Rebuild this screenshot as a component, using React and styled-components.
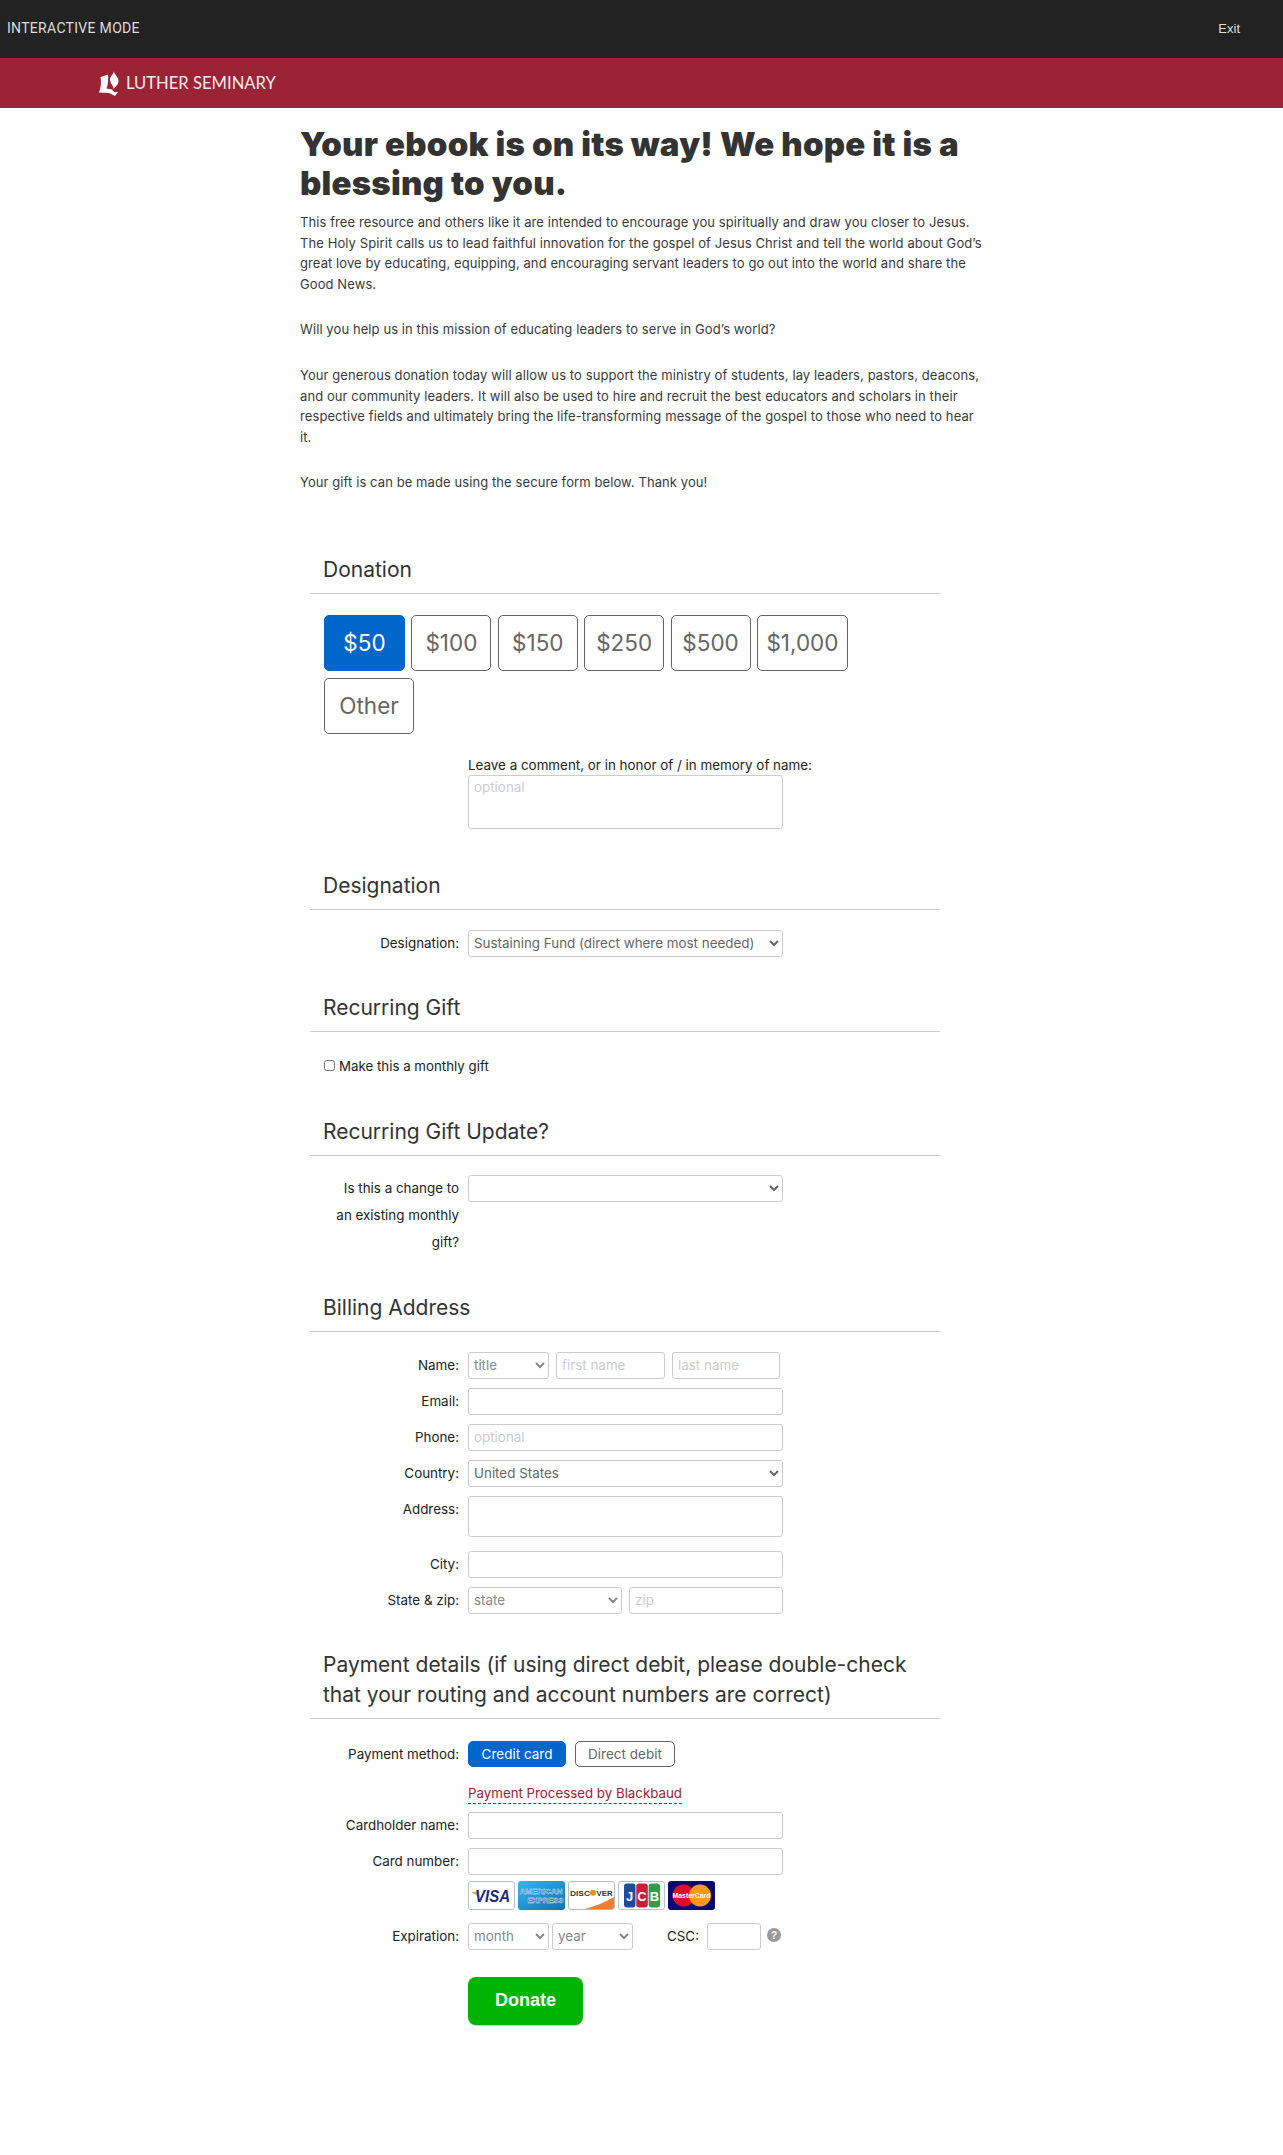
import React from "react";
import styled, { createGlobalStyle } from "styled-components";

const Global = createGlobalStyle`
  html, body { margin: 0; padding: 0; background: #fff; }
  body { font-family: Inter, "Liberation Sans", sans-serif; color: #333; }
  * { box-sizing: border-box; }
  ::placeholder { color: #ccc; opacity: 1; }
`;

const Page = styled.div`
  min-height: 2155px;
`;
const TopBar = styled.header`
  height: 58px;
  background: #222;
  display: flex;
  align-items: center;
  justify-content: space-between;
  padding: 0 43px 2px 7px;
`;
const ModeLabel = styled.span`
  font: 400 14px Roboto, sans-serif;
  letter-spacing: 0.3px;
  color: #ddd;
`;
const ExitLink = styled.span`
  font: 400 13px "Liberation Sans", sans-serif;
  color: #ddd;
`;
const Banner = styled.div`
  height: 50px;
  background: #9b2335;
  display: flex;
  align-items: center;
  gap: 7px;
  padding-left: 99px;
`;
const LogoText = styled.span`
  font: 400 16.6px Lato, sans-serif;
  color: #f6e9eb;
`;
const Main = styled.main`
  width: 683px;
  margin: 0 auto;
`;
const Title = styled.h1`
  margin: 17px 0 9px;
  font: 900 33px/39px Inter, sans-serif;
  letter-spacing: 0.22px;
  color: #333;
`;
const Para = styled.p`
  margin: 0 0 25px;
  font: 400 13px/20.6px Inter, sans-serif;
  color: #3a3a3a;
  letter-spacing: 0.09px;
  white-space: nowrap;
`;
const Form = styled.form`
  width: 630px;
  margin: 62px 0 0 10px;
`;
const SectionHead = styled.h2`
  margin: ${p => p.$top || 0}px 0 0;
  padding: 0 13px 8px;
  border-bottom: 1px solid #ccc;
  font: 400 21px/30px Inter, sans-serif;
  color: #333;
`;
const Amounts = styled.div`
  display: flex;
  flex-wrap: wrap;
  gap: 7px 6.4px;
  width: 560px;
  margin: 21px 0 0 14px;
`;
const Amount = styled.button`
  height: 56px;
  width: ${p => p.$w}px;
  border-radius: 5px;
  border: 1px solid ${p => (p.$active ? "#0066cc" : "#666")};
  background: ${p => (p.$active ? "#0066cc" : "#fff")};
  color: ${p => (p.$active ? "#fff" : "#666")};
  font: 400 22.5px Inter, sans-serif;
  padding: 0;
`;
const Row = styled.div`
  display: grid;
  grid-template-columns: 149px 1fr;
  column-gap: 9px;
  margin-top: ${p => p.$top ?? 9}px;
`;
const Label = styled.label`
  text-align: right;
  font: 400 13.4px/27px Inter, sans-serif;
  color: #222;
`;
const Fields = styled.div`
  display: flex;
  width: 315px;
  gap: ${p => p.$gap || 0}px;
  align-items: flex-start;
`;
const fieldStyle = `
  height: 27px;
  border: 1px solid #ccc;
  border-radius: 3px;
  background: #fff;
  font: 400 13.4px Inter, sans-serif;
  color: #666;
  padding: 0 5px;
  display: block;
`;
const Input = styled.input`
  ${fieldStyle}
  width: ${p => (p.$w ? p.$w + "px" : "100%")};
  flex: none;
`;
const CscInput = styled(Input)`
  margin-left: 5px;
`;
const Select = styled.select`
  ${fieldStyle}
  width: ${p => (p.$w ? p.$w + "px" : "100%")};
  flex: none;
  padding: 0 0 0 1px;
  color: ${p => (p.$muted ? "#888" : "#666")};
`;
const TextArea = styled.textarea`
  ${fieldStyle}
  width: 315px;
  height: ${p => p.$h}px;
  padding: 3px 5px;
  resize: none;
`;
const CommentLabel = styled.div`
  margin: 21px 0 0 158px;
  font: 400 13.4px/20px Inter, sans-serif;
  color: #222;
`;
const CommentBox = styled.div`
  margin: 0 0 0 158px;
`;
const CheckRow = styled.label`
  display: flex;
  align-items: center;
  gap: 4px;
  margin: 24px 0 0 14px;
  font: 400 13.3px/20px Inter, sans-serif;
  color: #222;
  input { margin: 0; width: 11px; height: 11px; }
`;
const PayButton = styled.button`
  height: 26px;
  width: ${p => p.$w}px;
  border-radius: 5px;
  border: 1px solid ${p => (p.$active ? "#0066cc" : "#666")};
  background: ${p => (p.$active ? "#0066cc" : "#fff")};
  color: ${p => (p.$active ? "#fff" : "#666")};
  font: 400 13.5px Inter, sans-serif;
  padding: 0;
`;
const Processor = styled.div`
  margin: 16px 0 0 158px;
  font: 400 13.3px/19px Inter, sans-serif;
  color: #9b2335;
  width: fit-content;
  border-bottom: 1px dashed #9b2335;
`;
const Cards = styled.div`
  display: flex;
  gap: 3px;
  margin: 6px 0 0 158px;
`;
const CscLabel = styled.span`
  font: 400 13.4px/27px Inter, sans-serif;
  color: #222;
  margin-left: 31px;
`;
const HelpDot = styled.span`
  width: 14px;
  height: 14px;
  border-radius: 50%;
  background: #999;
  color: #fff;
  font: 700 10.5px/14px "Liberation Sans", sans-serif;
  text-align: center;
  margin: 5px 0 0 3px;
  flex: none;
`;
const Donate = styled.button`
  display: block;
  width: 115px;
  height: 48px;
  margin: 27px 0 0 158px;
  background: #00b300;
  border: 0;
  border-radius: 8px;
  color: #fff;
  font: 700 18px "Liberation Sans", sans-serif;
  box-shadow: 0 1px 1px #ccc;
`;

const CardFrame = ({ stroke = "#b9c0d6", children }) => (
  <svg width="47" height="29" viewBox="0 0 47 29">
    <rect x="0.5" y="0.5" width="46" height="28" rx="2.5" fill="#fff" stroke={stroke} />
    {children}
  </svg>
);
const Visa = () => (
  <CardFrame>
    <path d="M3 11h6l3 5z" fill="#f0a030" />
    <text x="7" y="20.5" fontFamily="Liberation Sans" fontStyle="italic" fontWeight="700" fontSize="16.5" fill="#1a2a80" textLength="35" lengthAdjust="spacingAndGlyphs">VISA</text>
  </CardFrame>
);
const Amex = () => (
  <svg width="47" height="29" viewBox="0 0 47 29">
    <defs>
      <linearGradient id="amx" x1="0" y1="0" x2="1" y2="1">
        <stop offset="0" stopColor="#3db4ea" />
        <stop offset="1" stopColor="#0a72b8" />
      </linearGradient>
    </defs>
    <rect width="47" height="29" rx="3" fill="url(#amx)" />
    <text x="1.5" y="12.5" fontFamily="Liberation Sans" fontWeight="700" fontSize="7.4" fill="#0e6fb0" stroke="#e6f4fc" strokeWidth="0.35" textLength="43" lengthAdjust="spacingAndGlyphs">AMERICAN</text>
    <text x="9.5" y="22" fontFamily="Liberation Sans" fontWeight="700" fontSize="7.4" fill="#0e6fb0" stroke="#e6f4fc" strokeWidth="0.35" textLength="36" lengthAdjust="spacingAndGlyphs">EXPRESS</text>
  </svg>
);
const Discover = () => (
  <CardFrame stroke="#bbb">
    <path d="M17 28 C28 25 38 21 46 16 V26 a2 2 0 0 1 -2 2z" fill="#ee7f2d" />
    <text x="2" y="14.5" fontFamily="Liberation Sans" fontWeight="700" fontSize="8" fill="#333" textLength="20" lengthAdjust="spacingAndGlyphs">DISC</text>
    <circle cx="25" cy="11.7" r="3" fill="#f08a24" />
    <text x="28.5" y="14.5" fontFamily="Liberation Sans" fontWeight="700" fontSize="8" fill="#333" textLength="16" lengthAdjust="spacingAndGlyphs">VER</text>
  </CardFrame>
);
const Jcb = () => (
  <CardFrame>
    <rect x="6" y="2.5" width="11.5" height="24" rx="3" fill="#1c4c9c" />
    <rect x="18.3" y="2.5" width="11.5" height="24" rx="3" fill="#c8203a" />
    <rect x="30.6" y="2.5" width="11.5" height="24" rx="3" fill="#2e9e48" />
    <text x="11.7" y="20" textAnchor="middle" fontFamily="Liberation Sans" fontWeight="700" fontSize="13" fill="#fff">J</text>
    <text x="24" y="20" textAnchor="middle" fontFamily="Liberation Sans" fontWeight="700" fontSize="13" fill="#fff">C</text>
    <text x="36.4" y="20" textAnchor="middle" fontFamily="Liberation Sans" fontWeight="700" fontSize="13" fill="#fff">B</text>
  </CardFrame>
);
const MasterCard = () => (
  <svg width="47" height="29" viewBox="0 0 47 29">
    <rect width="47" height="29" rx="3" fill="#0a0a6e" />
    <circle cx="15.5" cy="14.5" r="11" fill="#d8102a" />
    <circle cx="32" cy="14.5" r="11" fill="#f79a1c" />
    <text x="23.5" y="17" textAnchor="middle" fontFamily="Liberation Sans" fontWeight="700" fontSize="8" fill="#fff" textLength="38" lengthAdjust="spacingAndGlyphs">MasterCard</text>
  </svg>
);
const LogoMark = () => (
  <svg width="20" height="25" viewBox="0 0 20 25">
    <path d="M1.5 6 L9 3.5 C9.5 8 9 14 7.5 17.5 L13 18.5 L15 21 L19 21 L16 25 L10 22 L0 21.5 C2 16 2.5 11 1.5 6z" fill="#fff" />
    <path d="M15 0 C14.5 3 19.5 5.5 19.5 10 C19.5 13.5 16.5 15.5 14.5 18 C15 15 11 13 11 8.5 C11 5 14.5 3.5 15 0z" fill="#fff" />
  </svg>
);

export default function App() {
  return (
    <Page>
      <Global />
      <TopBar>
        <ModeLabel>INTERACTIVE MODE</ModeLabel>
        <ExitLink>Exit</ExitLink>
      </TopBar>
      <Banner>
        <LogoMark />
        <LogoText>LUTHER SEMINARY</LogoText>
      </Banner>
      <Main>
        <Title>Your ebook is on its way! We hope it is a<br />blessing to you.</Title>
        <Para>This free resource and others like it are intended to encourage you spiritually and draw you closer to Jesus.<br />The Holy Spirit calls us to lead faithful innovation for the gospel of Jesus Christ and tell the world about God’s<br />great love by educating, equipping, and encouraging servant leaders to go out into the world and share the<br />Good News.</Para>
        <Para>Will you help us in this mission of educating leaders to serve in God’s world?</Para>
        <Para>Your generous donation today will allow us to support the ministry of students, lay leaders, pastors, deacons,<br />and our community leaders. It will also be used to hire and recruit the best educators and scholars in their<br />respective fields and ultimately bring the life-transforming message of the gospel to those who need to hear<br />it.</Para>
        <Para>Your gift is can be made using the secure form below. Thank you!</Para>
        <Form>
          <SectionHead>Donation</SectionHead>
          <Amounts>
            <Amount type="button" $w={81} $active>$50</Amount>
            <Amount type="button" $w={80}>$100</Amount>
            <Amount type="button" $w={80}>$150</Amount>
            <Amount type="button" $w={80}>$250</Amount>
            <Amount type="button" $w={80}>$500</Amount>
            <Amount type="button" $w={91}>$1,000</Amount>
            <Amount type="button" $w={90}>Other</Amount>
          </Amounts>
          <CommentLabel>Leave a comment, or in honor of / in memory of name:</CommentLabel>
          <CommentBox><TextArea $h={54} placeholder="optional" /></CommentBox>

          <SectionHead $top={42}>Designation</SectionHead>
          <Row $top={20}>
            <Label>Designation:</Label>
            <Fields><Select defaultValue="s"><option value="s">Sustaining Fund (direct where most needed)</option></Select></Fields>
          </Row>

          <SectionHead $top={36}>Recurring Gift</SectionHead>
          <CheckRow><input type="checkbox" />Make this a monthly gift</CheckRow>

          <SectionHead $top={41}>Recurring Gift Update?</SectionHead>
          <Row $top={19}>
            <Label>Is this a change to<br />an existing monthly<br />gift?</Label>
            <Fields><Select defaultValue=""><option value=""></option></Select></Fields>
          </Row>

          <SectionHead $top={37}>Billing Address</SectionHead>
          <Row $top={20}>
            <Label>Name:</Label>
            <Fields $gap={7}>
              <Select $w={81} $muted defaultValue="t"><option value="t">title</option></Select>
              <Input $w={109} placeholder="first name" />
              <Input $w={108} placeholder="last name" />
            </Fields>
          </Row>
          <Row><Label>Email:</Label><Fields><Input /></Fields></Row>
          <Row><Label>Phone:</Label><Fields><Input placeholder="optional" /></Fields></Row>
          <Row><Label>Country:</Label><Fields><Select defaultValue="us"><option value="us">United States</option></Select></Fields></Row>
          <Row><Label>Address:</Label><TextArea $h={41} /></Row>
          <Row $top={14}><Label>City:</Label><Fields><Input /></Fields></Row>
          <Row>
            <Label>State &amp; zip:</Label>
            <Fields $gap={7}>
              <Select $w={154} $muted defaultValue="s"><option value="s">state</option></Select>
              <Input $w={154} placeholder="zip" />
            </Fields>
          </Row>

          <SectionHead $top={36}>Payment details (if using direct debit, please double-check<br />that your routing and account numbers are correct)</SectionHead>
          <Row $top={22}>
            <Label>Payment method:</Label>
            <Fields $gap={9}>
              <PayButton type="button" $w={98} $active>Credit card</PayButton>
              <PayButton type="button" $w={100}>Direct debit</PayButton>
            </Fields>
          </Row>
          <Processor>Payment Processed by Blackbaud</Processor>
          <Row $top={8}><Label>Cardholder name:</Label><Fields><Input /></Fields></Row>
          <Row><Label>Card number:</Label><Fields><Input /></Fields></Row>
          <Cards><Visa /><Amex /><Discover /><Jcb /><MasterCard /></Cards>
          <Row $top={13}>
            <Label>Expiration:</Label>
            <Fields $gap={3}>
              <Select $w={81} $muted defaultValue="m"><option value="m">month</option></Select>
              <Select $w={81} $muted defaultValue="y"><option value="y">year</option></Select>
              <CscLabel>CSC:</CscLabel>
              <CscInput $w={54} />
              <HelpDot>?</HelpDot>
            </Fields>
          </Row>
          <Donate type="button">Donate</Donate>
        </Form>
      </Main>
    </Page>
  );
}
